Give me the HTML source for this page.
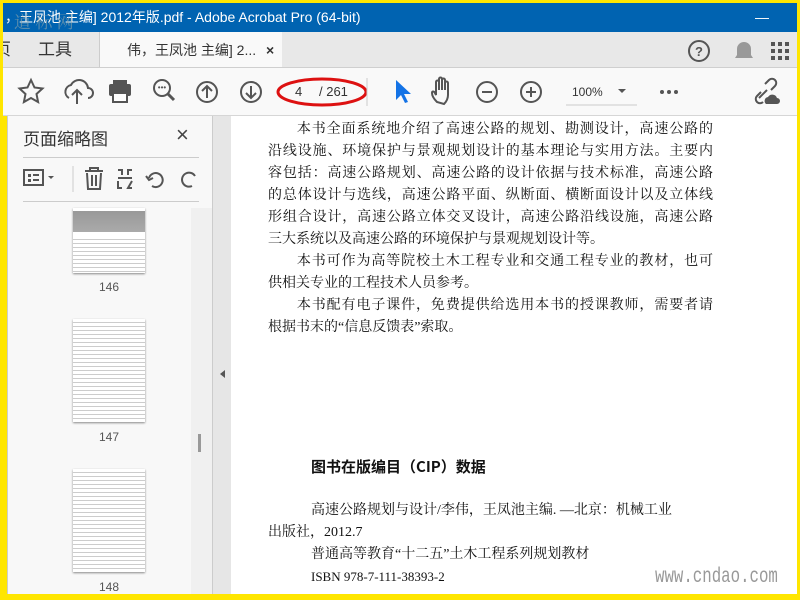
<!DOCTYPE html>
<html><head><meta charset="utf-8"><style>
*{margin:0;padding:0;box-sizing:border-box}
body{width:800px;height:600px;overflow:hidden;background:#ffe600;position:relative;font-family:"Liberation Sans","Noto Sans CJK SC",sans-serif}
.a{position:absolute}
.title{left:3px;top:3px;width:794px;height:29px;background:#0063b1;color:#fff;font-size:14px;line-height:29px;padding-left:2px}
.tabs{left:3px;top:32px;width:794px;height:36px;background:#e8e8e8;border-bottom:1px solid #cfcfcf;overflow:hidden}
.tool{left:3px;top:68px;width:794px;height:48px;background:#f9f9f9;border-bottom:1px solid #d6d6d6}
.panel{left:7px;top:116px;width:206px;height:478px;background:#f8f8f8;border-left:1px solid #ccc;border-right:1px solid #ccc;overflow:hidden}
.split{left:213px;top:116px;width:18px;height:478px;background:#e6e6e6}
.page{left:231px;top:116px;width:566px;height:478px;background:#fff}
.pt{font-family:"Liberation Serif","Noto Serif CJK SC",serif;font-size:14px;color:#111}
.para{left:268px;width:445px;line-height:22px;text-align:justify;text-align-last:justify}
.thumb{position:absolute;left:65px;width:72px;background:#fff;box-shadow:0 1px 2px #888}
.num{position:absolute;left:65px;width:72px;text-align:center;font-size:12px;color:#555}
.ic{stroke:#555;fill:none;stroke-width:2}
</style></head><body>
<div class="a title">，王凤池 主编] 2012年版.pdf - Adobe Acrobat Pro (64-bit)<span style="position:absolute;right:28px;top:0">—</span></div>
<div class="a" style="left:14px;top:8px;color:#9aa;font-size:17px;opacity:.6;font-family:'Noto Serif CJK SC',serif">道  标  网</div>
<div class="a tabs">
 <div class="a" style="left:0;top:0;width:97px;height:36px;border-right:1px solid #ccc;font-size:17px;line-height:36px;color:#333"><span style="position:absolute;left:-9px">页</span><span style="position:absolute;left:35px">工具</span></div>
 <div class="a" style="left:97px;top:0;width:182px;height:36px;background:#f9f9f9;font-size:14px;line-height:36px;color:#333;padding-left:27px">伟，王凤池 主编] 2... <b style="margin-left:6px">×</b></div>
 <svg class="a" style="left:684px;top:6px" width="110" height="26"><circle cx="12" cy="13" r="10" class="ic"/><text x="12" y="18" font-size="13" font-weight="bold" text-anchor="middle" fill="#555">?</text>
 <path d="M48 20h18l-2-3v-6a7 7 0 0 0-14 0v6z M54 22h6" fill="#999"/>
 <g fill="#555"><rect x="84" y="4" width="4" height="4"/><rect x="91" y="4" width="4" height="4"/><rect x="98" y="4" width="4" height="4"/><rect x="84" y="11" width="4" height="4"/><rect x="91" y="11" width="4" height="4"/><rect x="98" y="11" width="4" height="4"/><rect x="84" y="18" width="4" height="4"/><rect x="91" y="18" width="4" height="4"/><rect x="98" y="18" width="4" height="4"/></g></svg>
</div>
<div class="a tool">
 <svg width="794" height="48">
  <path d="M28 12l3.5 7.5 8 1-6 5.5 1.6 8-7.1-4-7.1 4 1.6-8-6-5.5 8-1z" class="ic"/>
  <path d="M66 30a7 7 0 0 1 2-13 9 9 0 0 1 17 3 5 5 0 0 1 0 10M74 36V23M69 27l5-5 5 5" class="ic"/>
  <rect x="106" y="16" width="22" height="12" rx="2" fill="#555"/><rect x="110" y="12" width="14" height="5" fill="#555"/><rect x="110" y="25" width="14" height="9" fill="#fff" stroke="#555" stroke-width="2"/>
  <circle cx="159" cy="20" r="8" class="ic"/><path d="M165 26l6 6" stroke="#555" stroke-width="3"/><text x="159" y="22" font-size="8" text-anchor="middle" fill="#555">•••</text>
  <circle cx="204" cy="24" r="10" class="ic"/><path d="M204 30V18M199 23l5-5 5 5" class="ic"/>
  <circle cx="248" cy="24" r="10" class="ic"/><path d="M248 18v12M243 25l5 5 5-5" class="ic"/>
  <ellipse cx="319" cy="24" rx="44" ry="13" fill="none" stroke="#d11" stroke-width="3"/>
  <text x="292" y="28" font-size="13" fill="#333">4</text><text x="316" y="28" font-size="13" fill="#333">/ 261</text>
  <line x1="364" y1="10" x2="364" y2="38" stroke="#ccc"/>
  <path d="M393 12v20l5-5 4 8 3-1-4-8h7z" fill="#1473e6"/>
  <path d="M434 34c-3-3-5-6-5-9 0-2 2-2 3 0l1 2V14c0-2 3-2 3 0v8-11c0-2 3-2 3 0v11-10c0-2 3-2 3 0v10-7c0-2 3-2 3 0v12c0 4-2 7-4 9z" class="ic" stroke-width="1.6"/>
  <circle cx="484" cy="24" r="10" class="ic"/><path d="M479 24h10" class="ic"/>
  <circle cx="528" cy="24" r="10" class="ic"/><path d="M523 24h10M528 19v10" class="ic"/>
  <text x="569" y="28" font-size="12" fill="#333">100%</text><path d="M615 21l4 4 4-4z" fill="#555"/><line x1="563" y1="37" x2="634" y2="37" stroke="#ccc"/>
  <g fill="#555"><circle cx="659" cy="24" r="2"/><circle cx="666" cy="24" r="2"/><circle cx="673" cy="24" r="2"/></g>
  <path d="M756 30l8-8m-4 12a4 4 0 0 1-6-6l4-4m10-2l4-4a4 4 0 0 0-6-6l-4 4" class="ic"/><path d="M763 36a4 4 0 0 1 2-7 5 5 0 0 1 9 1 3 3 0 0 1 0 6z" fill="#555"/>
 </svg>
</div>
<div class="a panel">
 <div class="a" style="left:15px;top:9px;font-size:17px;color:#333">页面缩略图</div>
 <div class="a" style="left:168px;top:6px;font-size:22px;color:#444">×</div>
 <div class="a" style="left:15px;top:41px;width:176px;border-top:1px solid #ccc"></div>
 <svg class="a" style="left:14px;top:48px" width="180" height="30">
  <rect x="2" y="6" width="19" height="15" class="ic"/><rect x="6" y="10" width="3" height="3" fill="#555"/><rect x="6" y="15" width="3" height="3" fill="#555"/><path d="M11 11h6M11 16h6" class="ic"/><path d="M26 12l3 3 3-3z" fill="#555"/>
  <line x1="51" y1="2" x2="51" y2="28" stroke="#ccc"/>
  <path d="M63 7h18M68 7V4h8v3M65 9l1 16h12l1-16M70 11v11M74 11v11" class="ic"/>
  <path d="M96 6h4v5M110 6h-4v5M96 14h14M96 17v7h4M110 17l-4 7h4" class="ic"/>
  <path d="M130 22a7 7 0 1 0-3-8M124 12l3 4 4-2" class="ic"/>
  <path d="M170 22a7 7 0 1 1 3-10" class="ic"/>
 </svg>
 <div class="a" style="left:15px;top:85px;width:176px;border-top:1px solid #ccc"></div>
 <div class="a" style="left:183px;top:92px;width:22px;height:386px;background:#f0f0f0"></div>
 <div class="a" style="left:190px;top:318px;width:3px;height:18px;background:#999"></div>
 <div class="thumb" style="top:92px;height:65px;background:linear-gradient(#fff 0,#fff 3px,#999 3px,#aaa 24px,#fff 24px,#fff 30px,transparent 30px),repeating-linear-gradient(#fff 0 3px,#ccc 3px 4px)"></div>
 <div class="num" style="top:164px">146</div>
 <div class="thumb" style="top:203px;height:103px;background:repeating-linear-gradient(#fff 0 3px,#ccc 3px 4px)"></div>
 <div class="num" style="top:314px">147</div>
 <div class="thumb" style="top:353px;height:103px;background:repeating-linear-gradient(#fff 0 3px,#ccc 3px 4px)"></div>
 <div class="num" style="top:464px">148</div>
</div>
<div class="a split"><div class="a" style="left:7px;top:254px;border:4px solid transparent;border-right:5px solid #555;border-left:0"></div></div>
<div class="a page"></div>
<div class="a pt para" style="top:116px;padding-top:0;margin-top:3px">&emsp;&emsp;本书全面系统地介绍了高速公路的规划、勘测设计，高速公路的<br>沿线设施、环境保护与景观规划设计的基本理论与实用方法。主要内<br>容包括：高速公路规划、高速公路的设计依据与技术标准，高速公路<br>的总体设计与选线，高速公路平面、纵断面、横断面设计以及立体线<br>形组合设计，高速公路立体交叉设计，高速公路沿线设施，高速公路<br><span style="text-align-last:left;display:block">三大系统以及高速公路的环境保护与景观规划设计等。</span></div>
<div class="a pt para" style="top:251px">&emsp;&emsp;本书可作为高等院校土木工程专业和交通工程专业的教材，也可<br><span style="text-align-last:left;display:block">供相关专业的工程技术人员参考。</span></div>
<div class="a pt para" style="top:295px">&emsp;&emsp;本书配有电子课件，免费提供给选用本书的授课教师，需要者请<br><span style="text-align-last:left;display:block">根据书末的“信息反馈表”索取。</span></div>
<div class="a pt" style="left:311px;top:456px;font-size:15px;font-weight:bold;font-family:'Noto Sans CJK SC',sans-serif">图书在版编目（CIP）数据</div>
<div class="a pt" style="left:268px;top:500px;line-height:22px;font-size:14px">
<div style="padding-left:43px">高速公路规划与设计/李伟，王凤池主编. —北京：机械工业</div>
<div>出版社，2012.7</div>
<div style="padding-left:43px">普通高等教育“十二五”土木工程系列规划教材</div>
<div style="padding-left:43px;font-size:13px">ISBN 978-7-111-38393-2</div>
</div>
<div class="a" style="left:655px;top:566px;font-family:'Liberation Mono',monospace;font-size:21px;color:#999;transform:scaleX(.75);transform-origin:left">www.cndao.com</div>
</body></html>
